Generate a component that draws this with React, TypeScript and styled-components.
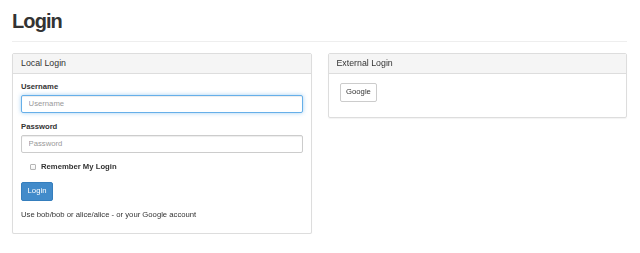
import styled, { createGlobalStyle, css } from 'styled-components';

const GlobalStyle = createGlobalStyle`
  html, body {
    margin: 0;
    padding: 0;
    background: #fff;
  }
  body {
    font-family: "Liberation Sans", Arial, Helvetica, sans-serif;
    font-size: 7.7px;
    line-height: 11px;
    color: #333;
  }
  * {
    box-sizing: border-box;
  }
`;

const Page = styled.div`
  padding: 0 13px 0 12px;
`;

const PageHeader = styled.div`
  margin-top: 9.5px;
  padding-bottom: 9.5px;
  border-bottom: 1px solid #eee;
`;

const Title = styled.h1`
  margin: 0;
  font-size: 20px;
  line-height: 22px;
  font-weight: bold;
  letter-spacing: -0.9px;
  color: #333;
`;

const Columns = styled.div`
  display: grid;
  grid-template-columns: 1fr 1fr;
  gap: 16px;
  align-items: start;
  margin-top: 11px;
`;

const Panel = styled.div`
  border: 1px solid #ddd;
  border-radius: 2px;
  background: #fff;
  box-shadow: 0 1px 1px rgba(0, 0, 0, 0.05);
`;

const PanelHeading = styled.div`
  padding: 5px 8px;
  background: #f5f5f5;
  border-bottom: 1px solid #ddd;
  font-size: 8.8px;
  line-height: 9px;
  color: #333;
`;

const PanelBody = styled.div<{ $bottom?: number }>`
  padding: 7px 8px ${(p) => p.$bottom ?? 8}px;
`;

const FormGroup = styled.div`
  margin-bottom: 8.25px;
`;

const Label = styled.label`
  display: block;
  margin-bottom: 2.75px;
  font-weight: bold;
`;

const Input = styled.input<{ $focused?: boolean }>`
  display: block;
  width: 100%;
  height: 18px;
  padding: 0 6.6px;
  font-family: inherit;
  font-size: 7.7px;
  color: #555;
  border: 1px solid #ccc;
  border-radius: 2px;
  box-shadow: inset 0 1px 1px rgba(0, 0, 0, 0.075);
  outline: none;

  &::placeholder {
    color: #999;
  }

  ${(p) =>
    p.$focused &&
    css`
      border-color: #66afe9;
      box-shadow: inset 0 1px 1px rgba(0, 0, 0, 0.075), 0 0 4px rgba(102, 175, 233, 0.6);
    `}
`;

const CheckRow = styled.label`
  display: flex;
  align-items: center;
  gap: 5px;
  padding-left: 9px;
  margin-bottom: 10px;
  font-weight: bold;
  cursor: pointer;
`;

const CheckBox = styled.input`
  appearance: none;
  margin: 0;
  width: 6px;
  height: 6px;
  border: 1px solid #b5b5b5;
  border-radius: 1px;
  background: linear-gradient(#fff, #f2f2f2);
`;

const Button = styled.button<{ $primary?: boolean }>`
  display: inline-block;
  height: 18.5px;
  padding: 0 5.6px;
  font-family: inherit;
  font-size: 7.7px;
  line-height: 10px;
  border-radius: 2px;
  cursor: pointer;
  color: ${(p) => (p.$primary ? '#fff' : '#333')};
  background: ${(p) => (p.$primary ? '#428bca' : '#fff')};
  border: 1px solid ${(p) => (p.$primary ? '#357ebd' : '#ccc')};
`;

const Help = styled.p`
  margin: 8px 0 5px;
`;

const ProviderList = styled.div`
  padding: 2px 0 0 3px;
`;

export default function App() {
  return (
    <Page>
      <GlobalStyle />
      <PageHeader>
        <Title>Login</Title>
      </PageHeader>
      <Columns>
        <Panel>
          <PanelHeading>Local Login</PanelHeading>
          <PanelBody>
            <FormGroup>
              <Label htmlFor="username">Username</Label>
              <Input id="username" placeholder="Username" $focused autoFocus />
            </FormGroup>
            <FormGroup>
              <Label htmlFor="password">Password</Label>
              <Input id="password" type="password" placeholder="Password" />
            </FormGroup>
            <CheckRow>
              <CheckBox type="checkbox" />
              Remember My Login
            </CheckRow>
            <Button $primary>Login</Button>
            <Help>Use bob/bob or alice/alice - or your Google account</Help>
          </PanelBody>
        </Panel>
        <Panel>
          <PanelHeading>External Login</PanelHeading>
          <PanelBody $bottom={15}>
            <ProviderList>
              <Button>Google</Button>
            </ProviderList>
          </PanelBody>
        </Panel>
      </Columns>
    </Page>
  );
}
